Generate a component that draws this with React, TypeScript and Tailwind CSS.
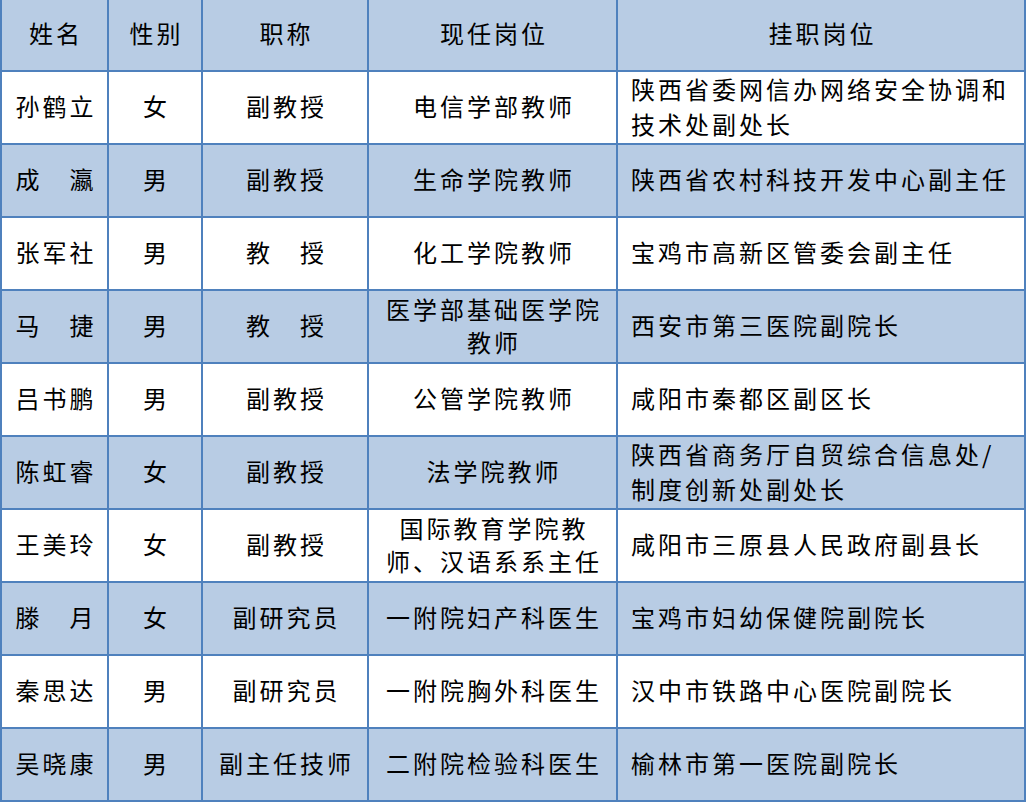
const rows: [string, string, string, string[], string[]][] = [
  ["孙鹤立", "女", "副教授", ["电信学部教师"], ["陕西省委网信办网络安全协调和", "技术处副处长"]],
  ["成　瀛", "男", "副教授", ["生命学院教师"], ["陕西省农村科技开发中心副主任"]],
  ["张军社", "男", "教　授", ["化工学院教师"], ["宝鸡市高新区管委会副主任"]],
  ["马　捷", "男", "教　授", ["医学部基础医学院", "教师"], ["西安市第三医院副院长"]],
  ["吕书鹏", "男", "副教授", ["公管学院教师"], ["咸阳市秦都区副区长"]],
  ["陈虹睿", "女", "副教授", ["法学院教师"], ["陕西省商务厅自贸综合信息处/", "制度创新处副处长"]],
  ["王美玲", "女", "副教授", ["国际教育学院教", "师、汉语系系主任"], ["咸阳市三原县人民政府副县长"]],
  ["滕　月", "女", "副研究员", ["一附院妇产科医生"], ["宝鸡市妇幼保健院副院长"]],
  ["秦思达", "男", "副研究员", ["一附院胸外科医生"], ["汉中市铁路中心医院副院长"]],
  ["吴晓康", "男", "副主任技师", ["二附院检验科医生"], ["榆林市第一医院副院长"]],
];

const headers = ["姓名", "性别", "职称", "现任岗位", "挂职岗位"];

const cell = "flex items-center justify-center text-center pl-[3px] pb-[4px]";

const App = () => {
  return (
    <div className="w-[1026px] h-[802px] bg-white font-['Noto_Sans_CJK_SC',sans-serif] text-[24px] tracking-[3px] text-black">
      <div className="grid grid-cols-[105px_92px_164px_247px_406px] grid-rows-[70px_repeat(10,71px)] gap-[2px] bg-[#4f81bd] px-[2px] pb-[2px]">
        {headers.map((h) => (
          <div key={h} className={`${cell} bg-[#b8cce4]`}>
            {h}
          </div>
        ))}
        {rows.map(([name, sex, title, current, post], i) => {
          const bg = i % 2 === 0 ? "bg-white" : "bg-[#b8cce4]";
          return [
            <div key={`${i}-a`} className={`${cell} ${bg}`}>{name}</div>,
            <div key={`${i}-b`} className={`${cell} ${bg}`}>{sex}</div>,
            <div key={`${i}-c`} className={`${cell} ${bg}`}>{title}</div>,
            <div key={`${i}-d`} className={`${cell} ${bg} flex-col leading-[33px]`}>
              {current.map((l) => (
                <span key={l}>{l}</span>
              ))}
            </div>,
            <div key={`${i}-e`} className={`${bg} flex flex-col justify-center pl-[13px] pb-[4px] leading-[35px]`}>
              {post.map((l) => (
                <span key={l} className="whitespace-nowrap">{l}</span>
              ))}
            </div>,
          ];
        })}
      </div>
    </div>
  );
};

export default App;
